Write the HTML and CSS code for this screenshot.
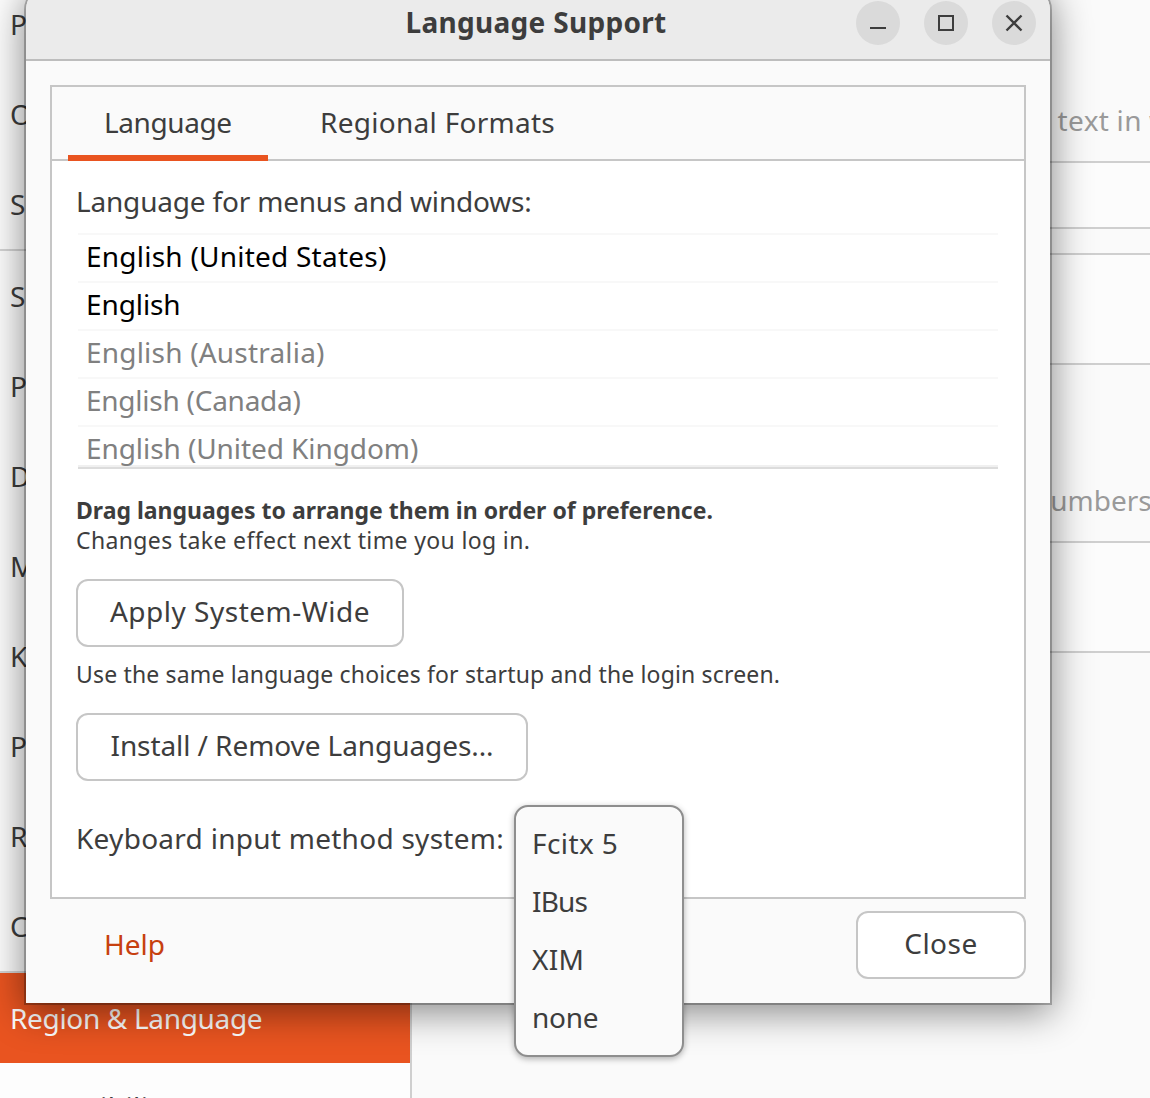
FILE: index.html
```
<!DOCTYPE html>
<html lang="en">
<head>
<meta charset="utf-8">
<title>Language Support</title>
<link rel="stylesheet" href="styles.css">
</head>
<body>
<div class="desktop">
  <div class="settings">
    <nav class="sidebar">
      <div class="nav-item">Privacy</div>
      <div class="nav-item">Online Accounts</div>
      <div class="nav-item">Sharing</div>
      <div class="nav-sep"></div>
      <div class="nav-item">Sound</div>
      <div class="nav-item">Power</div>
      <div class="nav-item">Displays</div>
      <div class="nav-item">Mouse &amp; Touchpad</div>
      <div class="nav-item">Keyboard</div>
      <div class="nav-item">Printers</div>
      <div class="nav-item">Removable Media</div>
      <div class="nav-item">Color</div>
      <div class="nav-sep"></div>
      <div class="nav-item selected">Region &amp; Language</div>
      <div class="nav-item last">Accessibility</div>
    </nav>
    <main class="content">
      <p class="hint hint-language">for text in windows</p>
      <div class="card card-language"></div>
      <div class="card card-region"></div>
      <p class="hint hint-formats">numbers, dates</p>
      <div class="card card-formats"></div>
    </main>
  </div>

  <section class="dialog">
    <header class="titlebar">
      <h1 class="title">Language Support</h1>
      <div class="controls">
        <button class="control" aria-label="Minimize"><svg viewBox="0 0 44 44"><path d="M14 27h16"/></svg></button>
        <button class="control" aria-label="Maximize"><svg viewBox="0 0 44 44"><path d="M15 15h14v14h-14z"/></svg></button>
        <button class="control" aria-label="Close window"><svg viewBox="0 0 44 44"><path class="cross" d="M14.5 14.5l15 15M29.5 14.5l-15 15"/></svg></button>
      </div>
    </header>
    <div class="body">
      <div class="notebook">
        <div class="tabs">
          <div class="tab active">Language</div>
          <div class="tab regional">Regional Formats</div>
        </div>
        <div class="page">
          <div class="label menus">Language for menus and windows:</div>
          <ul class="languages">
            <li class="enabled united-states">English (United States)</li>
            <li class="enabled english">English</li>
            <li class="australia">English (Australia)</li>
            <li class="canada">English (Canada)</li>
            <li class="kingdom">English (United Kingdom)</li>
          </ul>
          <div class="note strong">Drag languages to arrange them in order of preference.</div>
          <div class="note effect">Changes take effect next time you log in.</div>
          <button class="button apply">Apply System-Wide</button>
          <div class="note same">Use the same language choices for startup and the login screen.</div>
          <button class="button install">Install / Remove Languages...</button>
          <div class="label keyboard">Keyboard input method system:</div>
        </div>
      </div>
      <footer class="actions">
        <a class="help">Help</a>
        <button class="button close">Close</button>
      </footer>
    </div>
  </section>

  <ul class="menu">
    <li class="fcitx">Fcitx 5</li>
    <li class="ibus">IBus</li>
    <li class="xim">XIM</li>
    <li class="none">none</li>
  </ul>
</div>
</body>
</html>
```
FILE: styles.css
```
* { box-sizing: border-box; }

body {
  margin: 0;
  font-family: "Noto Sans", "Open Sans", sans-serif;
  font-size: 28px;
  line-height: 38px;
  color: #3d3d3d;
}
button { font: inherit; color: inherit; }
ul, p, h1 { margin: 0; padding: 0; list-style: none; }

.desktop {
  position: relative;
  width: 1150px;
  height: 1098px;
  overflow: hidden;
  background: #fafafa;
}

/* Settings window behind the dialog */
.settings { display: flex; height: 1098px; }
.sidebar {
  width: 412px;
  flex: none;
  margin-top: -21px;
  border-right: 2px solid #cfcfcf;
  background: #fdfdfd;
}
.nav-item {
  display: flex;
  align-items: center;
  height: 90px;
  padding-left: 10px;
  white-space: nowrap;
}
.nav-sep { height: 2px; background: #d4d4d4; }
.nav-item.selected { background: #e95420; color: #fff; letter-spacing: -.33px; }
.nav-item.last { height: 88px; letter-spacing: .45px; }

.content { flex: 1; min-width: 0; overflow: hidden; }
.hint { color: #9a9a9a; white-space: nowrap; }
.hint-language { padding: 101px 0 0 599px; letter-spacing: .4px; word-spacing: -.5px; }
.card {
  border: 2px solid #cfcfcf;
  border-right: 0;
  background: #fcfcfc;
}
.card-language { height: 68px; margin-top: 22px; }
.card-region { height: 112px; margin-top: 24px; }
.hint-formats { padding: 116px 0 0 621px; }
.card-formats { height: 112px; margin-top: 22px; }

/* Dialog */
.dialog {
  position: absolute;
  left: 26px;
  top: -14px;
  width: 1024px;
  height: 1017px;
  border-radius: 24px 24px 0 0;
  background: #fafafa;
  box-shadow: 0 0 0 2px rgba(0, 0, 0, .25), 0 7px 38px 2px rgba(0, 0, 0, .47);
}
.titlebar {
  display: grid;
  grid-template-columns: 1fr auto 1fr;
  align-items: center;
  height: 75px;
  padding: 0 14px 0 10px;
  border-bottom: 2px solid #bdbdbd;
  border-radius: 24px 24px 0 0;
  background: #ebebeb;
}
.title {
  grid-column: 2;
  margin-top: -2px;
  font-size: 28px;
  line-height: 38px;
  font-weight: 700;
  letter-spacing: .3px;
  white-space: nowrap;
}
.controls { display: flex; justify-content: flex-end; gap: 24px; }
.control {
  width: 44px;
  height: 44px;
  padding: 0;
  border: 0;
  border-radius: 50%;
  background: #dadada;
}
.control svg { display: block; width: 44px; height: 44px; fill: none; stroke: #3d3d3d; stroke-width: 2; }
.control .cross { stroke-width: 2.4; }

.body { padding: 24px; }
.notebook { height: 814px; border: 2px solid #c6c6c6; background: #fff; }
.tabs {
  display: flex;
  gap: 16px;
  height: 74px;
  padding-left: 16px;
  border-bottom: 2px solid #c6c6c6;
  background: #fafafa;
}
.tab { height: 74px; padding: 16px 36px 0; white-space: nowrap; }
.tab.active { width: 200px; border-bottom: 6px solid #e95420; letter-spacing: -.4px; }
.regional { letter-spacing: .28px; }

.page {
  display: flex;
  flex-direction: column;
  align-items: flex-start;
  padding: 0 24px;
  white-space: nowrap;
}
.menus { margin-top: 21px; letter-spacing: -.19px; }
.languages {
  width: 920px;
  height: 236px;
  margin: 13px 0 0 2px;
  overflow: hidden;
  color: #808080;
  border-bottom: 2px solid #dcdcdc;
  box-shadow: inset 0 -2px #f0f0f0;
}
.languages li { height: 48px; padding: 2px 0 0 8px; border-top: 2px solid #f8f8f8; }
.languages .enabled { color: #000; }
.united-states { letter-spacing: .23px; }
.english { letter-spacing: -.1px; }
.australia { letter-spacing: .2px; }
.canada { letter-spacing: -.25px; }
.kingdom { letter-spacing: -.08px; }
.note { font-size: 23px; line-height: 30px; }
.strong { margin-top: 26px; font-weight: 700; }
.effect { letter-spacing: .36px; }
.button {
  height: 68px;
  border: 2px solid #c6c6c6;
  border-radius: 12px;
  padding: 0 0 4px;
  background: #fff;
  white-space: nowrap;
}
.apply { width: 328px; margin-top: 24px; letter-spacing: .5px; }
.same { margin-top: 12px; letter-spacing: .16px; }
.install { width: 452px; margin-top: 24px; letter-spacing: -.08px; }
.keyboard { margin-top: 38px; letter-spacing: .27px; }

.actions { display: flex; justify-content: space-between; align-items: center; margin-top: 12px; }
.help { padding: 0 0 2px 54px; color: #c7400f; }
.close { width: 170px; letter-spacing: .5px; }

/* Open input-method menu */
.menu {
  position: absolute;
  left: 514px;
  top: 805px;
  width: 170px;
  height: 252px;
  padding: 8px 16px;
  border: 2px solid #8e8e8e;
  border-radius: 14px;
  background: #fafafa;
  box-shadow: 0 2px 6px rgba(0, 0, 0, .3);
}
.menu li { display: flex; align-items: center; height: 58px; padding-bottom: 2px; }
.fcitx { letter-spacing: .4px; }
.ibus { letter-spacing: -.8px; }
.xim { letter-spacing: .3px; }
.none { letter-spacing: -.3px; }
```
